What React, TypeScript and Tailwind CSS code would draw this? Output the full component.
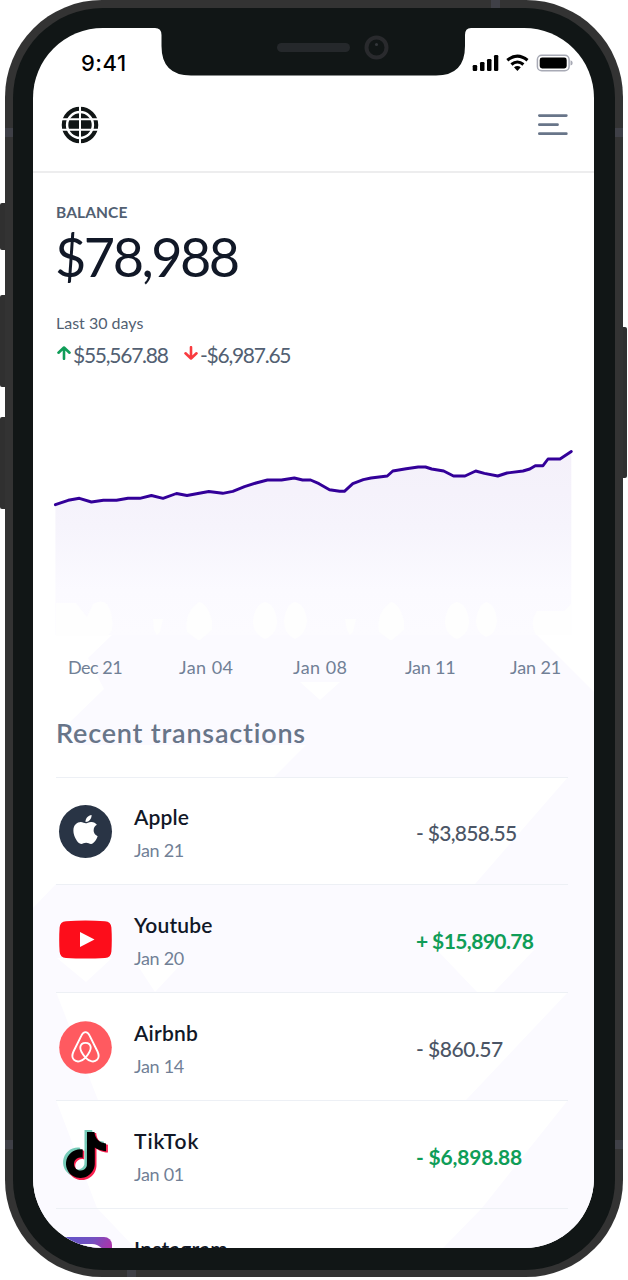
import React from "react";
import { FaApple } from "react-icons/fa";
import { SiTiktok } from "react-icons/si";

const line =
  "M55.4 504.7L68.2 500.3L79.4 498.3L91.4 502L103.4 500.3L116.5 500.3L128 498.3L139.8 498.3L151.4 495.5L163 498.3L176.5 493.5L187 495.5L208.8 491.5L222.7 493.3L232.8 491.3L244.5 486.7L256 483L267.4 480L281.5 480L294.3 478L302.6 480L310.6 480L319 483.7L329.5 489.7L339.7 491.3L344.4 491.3L352.8 483.7L363.3 479.7L371 478L387.3 476L392.8 471L406.2 468.7L418.2 467L425.5 467L431.7 469L443.7 471L453.5 476L465 476L475.7 471L484.4 473.3L497.8 476L507 473L523 471L529.8 469L535.3 465.7L543 465.7L548 459L560 459L571.3 451.5";

function Backdrop() {
  return (
    <svg className="absolute inset-0 h-full w-full" viewBox="33 28 561 1220" fill="#fbfaff" aria-hidden="true">
      <path d="M113 634H536L594 692V992H33V908L56 884H475L568 777H274L306 745H75L70 722L104 689L88 658Z" />
      <path d="M594 992H568L466 1100H568L482 1208L443 1248H594Z" />
      <path d="M33 992H56L98 1100H56L97 1208L135 1248H33Z" />
      <path d="M437 950H534L494 992H477ZM57 958H112L86 982ZM134 960H185L155 992ZM300 682H340L320 700Z" fill="#fff" />
    </svg>
  );
}

function Logo() {
  return (
    <svg className="block" width="40" height="40" viewBox="0 0 40 40">
      <circle cx="20" cy="20" r="16.2" fill="none" stroke="#111616" strokeWidth="4.1" />
      <circle cx="20" cy="20" r="11.7" fill="#111616" />
      <path d="M20 0V40M0 14.3H40M0 24.8H40" stroke="#fff" strokeWidth="2" />
    </svg>
  );
}

function StatusIcons() {
  return (
    <svg className="block" width="101" height="18" viewBox="0 0 101 18">
      <rect x=".7" y="11" width="4.5" height="6" rx="1.2" />
      <rect x="8" y="8" width="4.5" height="9" rx="1.2" />
      <rect x="15" y="5" width="4.5" height="12" rx="1.2" />
      <rect x="22" y="1" width="4.3" height="16" rx="1.2" />
      <path d="M35.3 6.3Q45.4-2 55.5 6.3M39.4 10.5Q45.4 5.5 51.4 10.5" fill="none" stroke="#000" strokeWidth="3.1" />
      <path d="M42 13.2Q45.4 10.9 48.8 13.2L45.4 17Z" />
      <rect x="65.4" y="1.2" width="31.7" height="15.6" rx="4.3" fill="none" stroke="#a8aab5" strokeWidth="1.5" />
      <rect x="67.7" y="3.5" width="27" height="11" rx="2.4" />
      <path d="M98.5 6.3Q100.7 7 100.7 9T98.5 11.5Z" fill="#a8aab5" />
    </svg>
  );
}

function Arrow({ down = false }: { down?: boolean }) {
  return (
    <svg className="block" width="14" height="14" viewBox="0 0 14 14" fill="none" strokeWidth="2.6" strokeLinecap="round" strokeLinejoin="round">
      {down ? (
        <path d="M7 1.2V12.2M1.5 7.3L7 12.5L12.5 7.3" stroke="#f93b3f" />
      ) : (
        <path d="M7 12.8V1.8M1.5 6.7L7 1.5L12.5 6.7" stroke="#0f9d58" />
      )}
    </svg>
  );
}

const appleIcon = (
  <div className="flex size-[53px] items-center justify-center rounded-full bg-[#293445] pb-[3px]">
    <FaApple className="size-[33px] text-white" />
  </div>
);

const youtubeIcon = (
  <svg className="block" width="53" height="53" viewBox="0 0 53 53">
    <path d="M7 8.2Q26.5 7 46 8.2Q52 8.6 52.4 14.5Q53.2 26.5 52.4 38.5Q52 44.5 46 45Q26.5 46 7 45Q1 44.5 .6 38.5Q-.2 26.5 .6 14.5Q1 8.6 7 8.2Z" fill="#fd0d1b" />
    <path d="M21 19V34L35.5 26.5Z" fill="#fff" />
  </svg>
);

const airbnbIcon = (
  <svg className="block" width="53" height="53" viewBox="0 0 53 53">
    <circle cx="26.5" cy="26.5" r="26.3" fill="#ff5a60" />
    <path d="M26.5 36.7C22.5 32 21 28.8 21.3 26.2C22 20.4 31 20.4 31.7 26.2C32 28.8 30.5 32 26.5 36.7C22.5 41 17.5 41.5 14.8 38.7C12.4 36.3 13 33.8 14.5 30.5L22.5 14.4C24.5 10 28.5 10 30.5 14.4L38.5 30.5C40 33.8 40.6 36.3 38.2 38.7C35.5 41.5 30.5 41 26.5 36.7Z" fill="none" stroke="#fff" strokeWidth="1.9" />
  </svg>
);

const tiktokIcon = (
  <div className="grid size-[53px] place-items-center pb-[1px]">
    <SiTiktok className="col-start-1 row-start-1 mr-[4px] mb-[3px] size-[47px] text-[#76cbb8]" />
    <SiTiktok className="col-start-1 row-start-1 mt-[3px] ml-[4px] size-[47px] text-[#f9204f]" />
    <SiTiktok className="col-start-1 row-start-1 size-[46px] text-black" />
  </div>
);

const instagramIcon = (
  <svg className="block" width="53" height="53" viewBox="0 0 53 53">
    <defs>
      <linearGradient id="insta" x1="0" y1="0" x2="1" y2=".6">
        <stop stopColor="#5d55cc" />
        <stop offset=".5" stopColor="#7450c0" />
        <stop offset=".85" stopColor="#b52fa7" />
      </linearGradient>
    </defs>
    <rect width="53" height="53" rx="8" fill="url(#insta)" />
    <rect x="8" y="9" width="36" height="36" rx="11" fill="none" stroke="#fff" strokeWidth="4" />
  </svg>
);

const rows = [
  { name: "Apple", date: "Jan 21", amount: "- $3,858.55", icon: appleIcon, nameStyle: "tracking-[0.15px]", style: "font-medium text-[#4b5565] tracking-[-0.7px]" },
  { name: "Youtube", date: "Jan 20", amount: "+ $15,890.78", icon: youtubeIcon, nameStyle: "tracking-[0.2px]", style: "font-bold text-[#0f9d58] tracking-[-0.6px]" },
  { name: "Airbnb", date: "Jan 14", amount: "- $860.57", icon: airbnbIcon, nameStyle: "tracking-[0.2px]", style: "font-medium text-[#4b5565] tracking-[-0.5px]" },
  { name: "TikTok", date: "Jan 01", amount: "- $6,898.88", icon: tiktokIcon, nameStyle: "tracking-[0.95px]", style: "font-bold text-[#0f9d58] tracking-[-0.2px]" },
  { name: "Instagram", date: "", amount: "", icon: instagramIcon, nameStyle: "tracking-[0.25px]", style: "" },
];

export default function App() {
  return (
    <div className="relative h-[1280px] w-[628px] overflow-hidden bg-white px-[5px] font-['Lato',sans-serif] whitespace-nowrap">
      <div className="absolute top-[203px] left-0 h-[47px] w-[8px] rounded-l-[2px] bg-[#303030]" />
      <div className="absolute top-[295px] left-0 h-[92px] w-[8px] rounded-l-[2px] bg-[#303030]" />
      <div className="absolute top-[417px] left-0 h-[92px] w-[8px] rounded-l-[2px] bg-[#303030]" />
      <div className="absolute top-[327px] left-[619px] h-[151px] w-[8px] rounded-r-[2px] bg-[#303030]" />

      <div className="relative h-[1277px] w-[617.5px] overflow-hidden rounded-[97px] bg-[#333333] p-[7.5px]">
        <div className="absolute top-[128px] left-0 h-[9px] w-full bg-[#3f4047]" />
        <div className="absolute top-[1140px] left-0 h-[9px] w-full bg-[#3f4047]" />
        <div className="absolute top-0 left-[486px] h-[9px] w-[9px] bg-[#3f4047]" />
        <div className="absolute bottom-0 left-[122px] h-[9px] w-[9px] bg-[#3f4047]" />

        <div className="relative h-[1262px] overflow-hidden rounded-[90px] bg-[#111616] px-[20.5px] pt-[20.5px]">
          <main className="relative flex h-[1220px] w-[561px] flex-col overflow-hidden rounded-[70px] bg-white">
            <Backdrop />

            <div className="relative flex h-[48px] shrink-0 justify-between pr-[21px] pl-[48px]">
              <span className="mt-[22px] font-['Inter'] text-[22px] leading-[26px] font-medium tracking-[0.5px] text-black">9:41</span>
              <div className="mt-[26px]">
                <StatusIcons />
              </div>
              <svg className="absolute top-0 left-[122px]" width="316" height="48" viewBox="0 0 316 48">
                <path d="M0 0Q6.5 0 6.5 7V18Q6.5 47.5 36 47.5H281Q310 47.5 310 18V7Q310 0 316 0Z" fill="#111616" />
                <rect x="122" y="15" width="73" height="9" rx="4.5" fill="#25282b" />
                <circle cx="221.5" cy="19.5" r="10" fill="#111616" stroke="#292a2d" strokeWidth="4" />
                <circle cx="221.5" cy="16.5" r="1.5" fill="#34373b" />
              </svg>
            </div>

            <header className="relative flex h-[97px] shrink-0 items-start justify-between border-b-2 border-[#ededee] pt-[29px] pr-[25px] pl-[27px]">
              <Logo />
              <svg className="mt-[4px] block" width="32" height="32" viewBox="0 0 32 32" stroke="#687589" strokeWidth="2.8" strokeLinecap="round">
                <path d="M2.4 6.6H29.3M2.4 15.7H20.5M2.4 24.7H29.3" />
              </svg>
            </header>

            <section className="relative h-[257px] shrink-0 px-[23px] pt-[29px] text-[#525f72]">
              <div className="text-[15.5px] leading-[20px] font-bold tracking-[0.1px]">BALANCE</div>
              <div className="mt-[7px] -ml-px text-[54px] leading-[56px] tracking-[-2.5px] text-[#111827]">$78,988</div>
              <div className="mt-[28px] text-[16px] leading-[20px] tracking-[0px]">Last 30 days</div>
              <div className="mt-[9px] flex items-center text-[21px] leading-[26px] tracking-[-1.25px]">
                <div className="mt-[-4px] mr-[2px] ml-[1px]"><Arrow /></div>
                <span className="w-[111px]">$55,567.88</span>
                <div className="mt-[-4px] mr-[2px]"><Arrow down /></div>
                <span>-$6,987.65</span>
              </div>
            </section>

            <section className="relative h-[250px] shrink-0 pt-[10px] pl-[17px]">
              <svg className="block" width="530" height="200" viewBox="50 440 530 200">
                <defs>
                  <linearGradient id="area" gradientUnits="userSpaceOnUse" x1="0" y1="455" x2="0" y2="635">
                    <stop stopColor="#f4f0fa" />
                    <stop offset=".4" stopColor="#f6f4fc" />
                    <stop offset=".75" stopColor="#fbfaff" />
                    <stop offset="1" stopColor="#fcfbff" />
                  </linearGradient>
                </defs>
                <path d={line + "V635H55.4Z"} fill="url(#area)" />
                <g fill="#fefefe">
                  <path d="M56 603H76L87 617L93 604Q101 599 107 604Q114 615 112 630L108 636H56Z" />
                  <path d="M153 619H163L160 632L157 635L154 630Z" />
                  <path d="M199 602Q208 604 212 621V630L199 641L187 632Q184 612 199 602Z" />
                  <path d="M265 602Q275 604 277 621Q277 634 265 639Q253 634 253 621Q255 604 265 602Z" />
                  <path d="M295 602Q305 604 307 621Q306 634 295 639Q284 634 284 621Q286 604 295 602Z" />
                  <path d="M345 619H356L353 632L350 635L347 630Z" />
                  <path d="M391 602Q400 604 404 621V630L391 641L379 632Q376 612 391 602Z" />
                  <path d="M457 602Q467 604 469 621Q469 634 457 639Q445 634 445 621Q447 604 457 602Z" />
                  <path d="M487 602Q496 606 497 621Q496 634 486 637Q476 632 476 621Q478 604 487 602Z" />
                  <path d="M537 611H564L571 604V635H536Q529 622 537 611Z" />
                </g>
                <path d={line} fill="none" stroke="#330099" strokeWidth="2.9" strokeLinecap="round" strokeLinejoin="round" />
              </svg>
              <div className="mt-[14.5px] flex text-[18px] leading-[24px] text-[#718096]">
                <span className="ml-[18px] w-[111px] tracking-[-0.5px]">Dec 21</span>
                <span className="w-[114px] tracking-[0.45px]">Jan 04</span>
                <span className="w-[112px] tracking-[0.45px]">Jan 08</span>
                <span className="w-[105px] tracking-[-0.2px]">Jan 11</span>
                <span className="tracking-[-0.1px]">Jan 21</span>
              </div>
            </section>

            <section className="relative shrink-0 px-[23px] pt-[36px] text-[#687589]">
              <h2 className="h-[61px] text-[27px] leading-[34px] font-semibold tracking-[0.8px]">Recent transactions</h2>
              <div className="w-[512px]">
                {rows.map((row) => (
                  <div key={row.name} className="flex h-[108px] border-t border-[#edf0f5] pt-px pl-[3px] first:h-[107px] first:pt-0">
                    <div className="mt-[26.5px] w-[75px]">{row.icon}</div>
                    <div className="w-[282px] pt-[26px]">
                      <div className={"text-[21px] leading-[26px] font-semibold text-[#111827] " + row.nameStyle}>{row.name}</div>
                      <div className="mt-[8px] text-[18px] leading-[24px] tracking-[-0.3px] text-[#718096]">{row.date}</div>
                    </div>
                    <div className={"pt-[42px] text-[21px] leading-[26px] " + row.style}>{row.amount}</div>
                  </div>
                ))}
              </div>
            </section>
          </main>
        </div>
      </div>
    </div>
  );
}
